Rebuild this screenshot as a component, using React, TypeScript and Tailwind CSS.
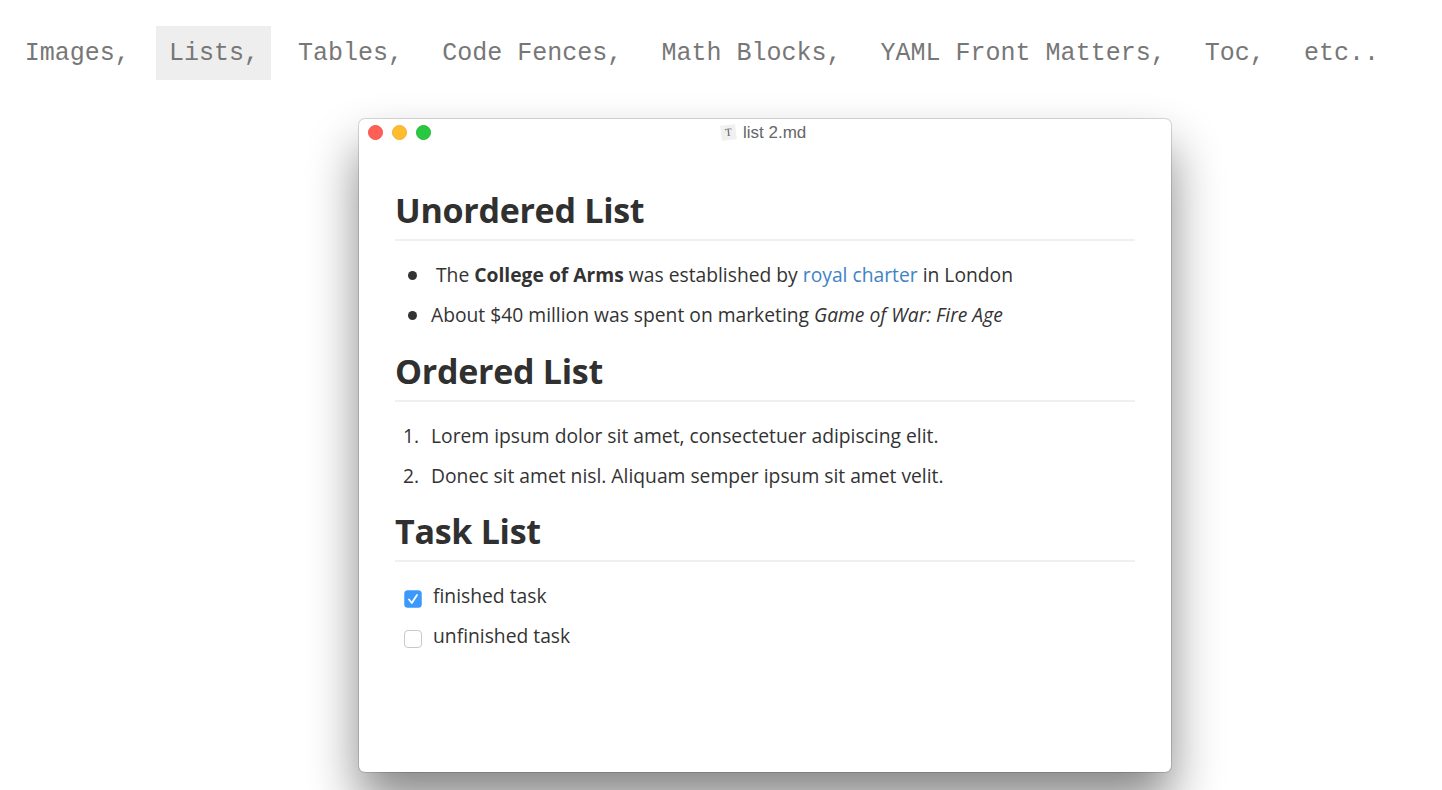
import React from "react";

const tabs = ["Images,", "Lists,", "Tables,", "Code Fences,", "Math Blocks,", "YAML Front Matters,", "Toc,", "etc.."];

function Heading({ children }: { children: React.ReactNode }) {
  return (
    <h2 className="h-[55px] border-b-2 border-[#f0f0f0] text-[34px] leading-[48px] font-bold tracking-[-0.28px] whitespace-nowrap text-[#303030]">
      {children}
    </h2>
  );
}

function Row({ marker, children }: { marker: React.ReactNode; children: React.ReactNode }) {
  return (
    <li className="flex h-10 whitespace-pre text-[19.27px] leading-10">
      <span className="w-9 shrink-0">{marker}</span>
      <span>{children}</span>
    </li>
  );
}

const dot = <span className="mt-4 ml-[13px] block size-[9px] rounded-full bg-[#333333]" />;

export default function App() {
  return (
    <div className="h-[790px] w-[1442px] overflow-hidden bg-white">
      <nav className="flex gap-[14.15px] pt-[26px] pl-[12.25px] font-['Liberation_Mono',monospace] text-[25px] text-[#777777]">
        {tabs.map((t) => (
          <span key={t} className={`h-[54px] px-[12.5px] leading-[55px] whitespace-nowrap ${t === "Lists," ? "bg-[#eeeeee]" : ""}`}>{t}</span>
        ))}
      </nav>
      <main className="mt-[39px] ml-[359px] h-[653px] w-[812px] rounded-[6px] bg-white shadow-[0_0_0_1px_rgba(0,0,0,0.14),0_29px_50px_rgba(0,0,0,0.48)]">
        <header className="flex h-[26px] items-center">
          <div className="flex w-[362px] gap-[9px] pl-[9px]">
            <i className="size-[15px] rounded-full border border-[#f2554e] bg-[#ff5f57]" />
            <i className="size-[15px] rounded-full border border-[#efb02e] bg-[#ffbd2e]" />
            <i className="size-[15px] rounded-full border border-[#1fbb36] bg-[#28c940]" />
          </div>
          <span className="flex size-[15px] -rotate-6 items-center justify-center bg-[#f0f0f0] font-['Liberation_Serif',serif] text-[11px] text-[#555555]">T</span>
          <span className="mt-px ml-[7px] font-['Liberation_Sans',sans-serif] text-[17px] text-[#666666]">list 2.md</span>
        </header>
        <div className="px-9 pt-[41px] font-['Open_Sans',sans-serif] text-[#333333]">
          <Heading>Unordered List</Heading>
          <ul className="pt-[14px] pb-[12px]">
            <Row marker={dot}> The <b>College of Arms</b> was established by <a className="text-[#4183c4]">royal charter</a> in London</Row>
            <Row marker={dot}>About $40 million was spent on marketing <i>Game of War: Fire Age</i></Row>
          </ul>
          <Heading>Ordered List</Heading>
          <ol className="pt-[14px] pb-[11px]">
            <Row marker={<span className="block w-6 text-right">1.</span>}>Lorem ipsum dolor sit amet, consectetuer adipiscing elit.</Row>
            <Row marker={<span className="block w-6 text-right">2.</span>}>Donec sit amet nisl. Aliquam semper ipsum sit amet velit.</Row>
          </ol>
          <Heading>Task List</Heading>
          <ul className="pt-[14px]">
            <Row marker={
              <svg viewBox="0 0 18 18" className="mt-[14px] ml-[9px] size-[18px]" fill="none">
                <rect x=".25" y=".25" width="17.5" height="17.5" rx="3.5" fill="#3b99fc" />
                <path d="M5 9.5 7.8 13 13 5" stroke="white" strokeWidth="1.8" strokeLinecap="round" strokeLinejoin="round" />
              </svg>
            }><span className="ml-[2px]">finished task</span></Row>
            <Row marker={<span className="mt-[14px] ml-[9px] block size-[18px] rounded-[4px] border border-[#c8c8c8] bg-white" />}><span className="ml-[2px]">unfinished task</span></Row>
          </ul>
        </div>
      </main>
    </div>
  );
}
